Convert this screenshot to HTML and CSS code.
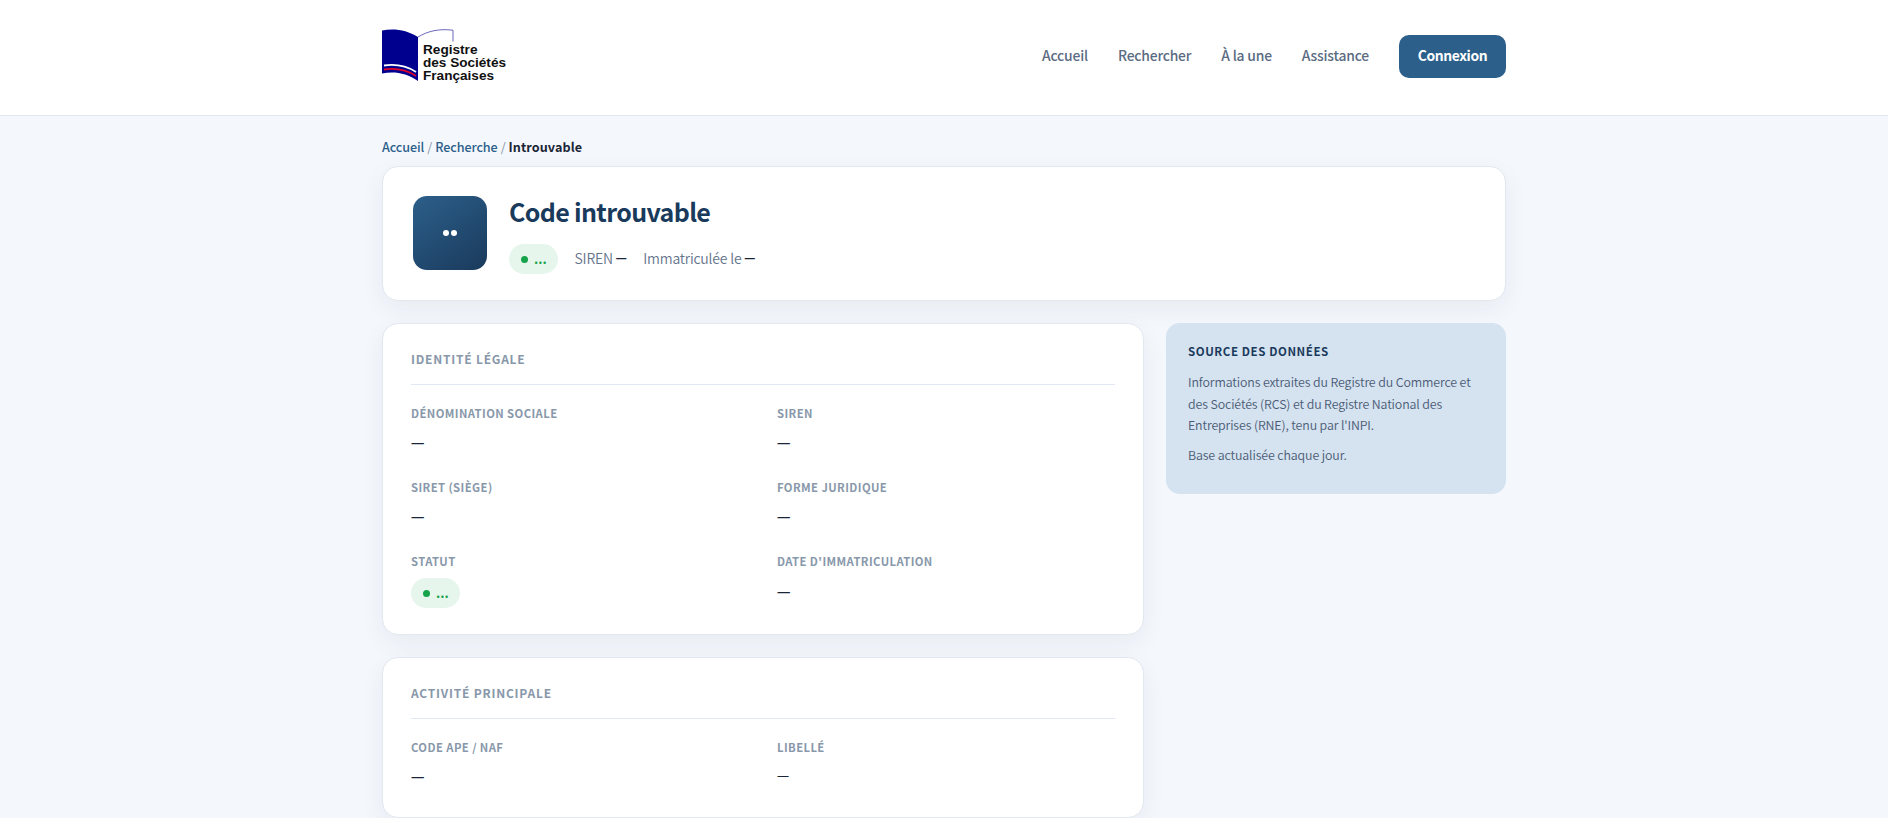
FILE: index.html
```html
<!DOCTYPE html>
<html lang="fr">
<head>
<meta charset="utf-8">
<title>Registre des Sociétés Françaises</title>
<link rel="stylesheet" href="styles.css">
</head>
<body>
<header class="site-header">
  <div class="container header-inner">
    <a class="logo" aria-label="Registre des Sociétés Françaises">
      <svg width="126" height="56" viewBox="0 0 126 56">
        <path d="M0 1.500 C12 -1 25 1 36 8 V52 C25 44 12 42 0 44.500Z" fill="#00008f"/>
        <path d="M36 8 C46 2 57 -.5 71 1.200 V12.500" fill="none" stroke="#5858b4" stroke-width=".9"/>
        <path d="M2 36.500 C13 35 24 36.500 34 43" fill="none" stroke="#fff" stroke-width="1.800"/>
        <path d="M2 40.500 C13 39 24 40.500 34 47" fill="none" stroke="#e00028" stroke-width="1.800"/>
        <g class="logo-text">
          <text x="41" y="25" textLength="54.500" lengthAdjust="spacingAndGlyphs">Registre</text>
          <text x="41" y="38" textLength="83" lengthAdjust="spacingAndGlyphs">des Sociétés</text>
          <text x="41" y="51" textLength="71" lengthAdjust="spacingAndGlyphs">Françaises</text>
        </g>
      </svg>
    </a>
    <nav class="nav">
      <a>Accueil</a>
      <a>Rechercher</a>
      <a>À la une</a>
      <a>Assistance</a>
      <a class="btn">Connexion</a>
    </nav>
  </div>
</header>
<main class="container">
  <div class="breadcrumb"><a>Accueil</a><i>/</i><a>Recherche</a><i>/</i><b>Introuvable</b></div>
  <section class="card hero">
    <div class="avatar"><span></span><span></span></div>
    <div>
      <h1>Code introuvable</h1>
      <div class="meta">
        <span class="pill">...</span>
        <span>SIREN <b class="dash">—</b></span>
        <span>Immatriculée le <b class="dash">—</b></span>
      </div>
    </div>
  </section>
  <div class="columns">
    <div class="stack">
      <section class="card panel">
        <h2>IDENTITÉ LÉGALE</h2>
        <dl class="fields">
          <div><dt>DÉNOMINATION SOCIALE</dt><dd>—</dd></div>
          <div><dt>SIREN</dt><dd>—</dd></div>
          <div><dt>SIRET (SIÈGE)</dt><dd>—</dd></div>
          <div><dt>FORME JURIDIQUE</dt><dd>—</dd></div>
          <div><dt>STATUT</dt><dd class="status"><span class="pill">...</span></dd></div>
          <div><dt>DATE D'IMMATRICULATION</dt><dd class="low">—</dd></div>
        </dl>
      </section>
      <section class="card panel">
        <h2>ACTIVITÉ PRINCIPALE</h2>
        <dl class="fields">
          <div><dt>CODE APE / NAF</dt><dd>—</dd></div>
          <div><dt>LIBELLÉ</dt><dd class="light">—</dd></div>
        </dl>
      </section>
    </div>
    <aside class="source">
      <h3>SOURCE DES DONNÉES</h3>
      <p>Informations extraites du Registre du Commerce et des Sociétés (RCS) et du Registre National des Entreprises (RNE), tenu par l'INPI.</p>
      <p>Base actualisée chaque jour.</p>
    </aside>
  </div>
</main>
</body>
</html>
```
FILE: styles.css
```css
* { box-sizing: border-box; }
html { overflow: hidden; }
body {
  margin: 0;
  height: 818px;
  overflow: hidden;
  background: #f4f7fc;
  color: #1a2536;
  font-family: "Noto Sans CJK JP", "Noto Sans", sans-serif;
  font-size: 14px;
}
h1, h2, h3, p, dl, dd { margin: 0; }
.container { width: 1124px; margin: 0 auto; }
.site-header { height: 116px; background: #fff; border-bottom: 1px solid #e2e8f3; }
.header-inner { height: 113px; display: flex; align-items: center; justify-content: space-between; }
.logo { display: flex; }
.logo svg { display: block; }
.logo-text { font: bold 13.200px "Liberation Sans", Arial, sans-serif; fill: #111; }
.nav { display: flex; align-items: center; gap: 30px; font-size: 13.900px; font-weight: 500; color: #5a6b82; letter-spacing: -.2px; }
.nav a { padding-bottom: 3px; }
.nav .btn { width: 107px; height: 43px; padding: 0; line-height: 41px; border-radius: 10px; background: #2c5f8a; color: #fff; font-weight: 700; text-align: center; letter-spacing: -.4px; }
.breadcrumb { padding-top: 21px; height: 50px; line-height: 20px; font-size: 12.600px; font-weight: 500; color: #2c5f8a; letter-spacing: -.08px; }
.breadcrumb i { font-style: normal; font-weight: 400; color: #8595a8; margin: 0 3px; }
.breadcrumb b { color: #1a2536; letter-spacing: .1px; }
.card { background: #fff; border: 1px solid #e2e8f0; border-radius: 16px; box-shadow: 0 8px 24px rgba(26, 37, 54, .06); }
.hero { height: 135px; padding: 29px 30px; display: flex; gap: 22px; }
.avatar { width: 74px; height: 74px; border-radius: 14px; background: linear-gradient(145deg, #2c5f8a, #1a3a5c); display: flex; align-items: center; justify-content: center; gap: 2px; }
.avatar span { width: 6px; height: 6px; border-radius: 50%; background: #fff; }
h1 { font-size: 25px; line-height: 31px; color: #1a3a5c; letter-spacing: -.66px; font-weight: 700; }
.meta { display: flex; align-items: center; gap: 16.500px; margin-top: 17px; color: #64748b; font-weight: 350; line-height: 28px; letter-spacing: -.2px; }
.dash { position: relative; top: -3px; font-family: "Open Sans", sans-serif; font-size: 11px; color: #1a2536; letter-spacing: 0; }
.pill { display: inline-flex; align-items: center; gap: 6px; width: 49px; height: 30px; padding-left: 12px; border-radius: 15px; background: #e6f6ec; color: #16a34a; font-family: "Noto Sans CJK JP", sans-serif; font-size: 13px; font-weight: 700; line-height: 28px; letter-spacing: 0; }
.pill::before { content: ""; width: 7px; height: 7px; border-radius: 50%; background: #16a34a; }
.columns { display: grid; grid-template-columns: 762px 340px; gap: 22px; margin-top: 22px; align-items: start; }
.stack { display: grid; gap: 22px; }
.panel { padding: 25px 28px 26px; }
h2 { height: 36px; line-height: 20px; border-bottom: 1px solid #e2e8f3; font-size: 12px; color: #8898aa; letter-spacing: .78px; }
.fields { display: grid; grid-template-columns: 1fr 1fr; gap: 21px 28px; margin-top: 19px; }
dt { height: 23px; line-height: 18px; font-size: 11.300px; font-weight: 700; color: #8898aa; letter-spacing: .4px; }
dd { height: 30px; font: 600 13.400px/32px "Open Sans", sans-serif; }
.status { display: flex; margin-top: 3px; }
.low { margin-top: 1px; }
.light { font-size: 12px; font-weight: 400; line-height: 30px; }
.source { height: 171px; padding: 18px 22px; border-radius: 14px; background: #d5e2ef; color: #4a5b76; font-size: 12.400px; font-weight: 350; line-height: 21.600px; letter-spacing: -.12px; }
h3 { font-size: 11.500px; line-height: 20px; color: #1a3a5c; letter-spacing: .58px; }
.source p { margin-top: 11px; }
.source p + p { margin-top: 8px; }
```
